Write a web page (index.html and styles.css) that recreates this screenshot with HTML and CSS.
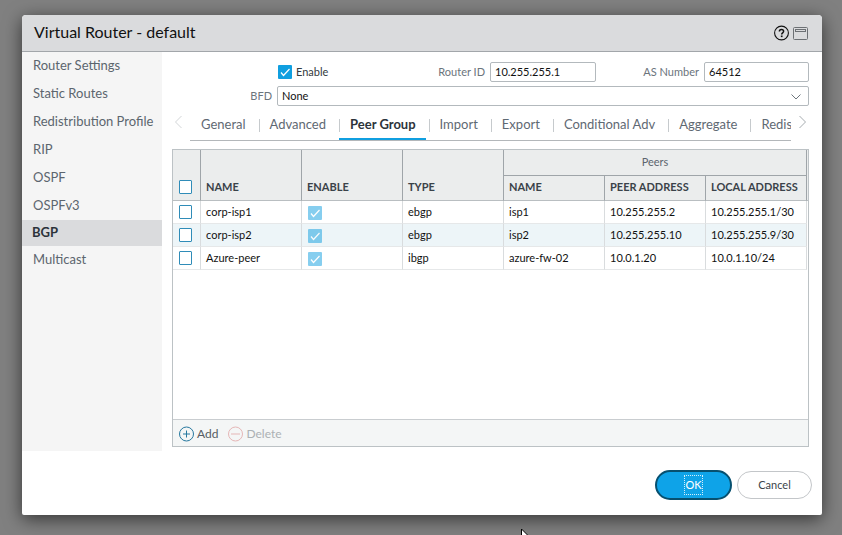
FILE: index.html
```html
<!DOCTYPE html>
<html lang="en">
<head>
<meta charset="utf-8">
<title>Virtual Router - default</title>
<link rel="stylesheet" href="styles.css">
</head>
<body>
<main class="dialog">
  <header class="titlebar">
    <h1>Virtual Router - default</h1>
    <button class="tool" type="button" aria-label="Help">
      <svg width="16" height="16" viewBox="0 0 16 16" fill="none" stroke="#111"><circle cx="7.500" cy="8" r="6.900" stroke-width="1.100"/><path d="M5.400 6.500C5.400 5 6.200 4.500 7.500 4.500s2.100.7 2.100 1.800c0 1.500-1.900 1.600-1.900 3.200" stroke-width="1.500"/><path d="M7.700 10.500v1.600" stroke-width="1.700"/></svg>
    </button>
    <button class="tool" type="button" aria-label="Maximize">
      <svg width="16" height="16" viewBox="0 0 16 16" fill="none" stroke="#6c7074"><rect x=".5" y="2.500" width="14" height="12" rx="1"/><rect x="2.500" y="4.500" width="10" height="2"/></svg>
    </button>
  </header>

  <div class="body">
    <nav class="sidebar">
      <a href="#">Router Settings</a>
      <a href="#">Static Routes</a>
      <a href="#">Redistribution Profile</a>
      <a href="#">RIP</a>
      <a href="#">OSPF</a>
      <a href="#">OSPFv3</a>
      <a href="#" class="current">BGP</a>
      <a href="#">Multicast</a>
    </nav>

    <section class="content">
      <div class="form">
        <label class="enable"><input class="check" type="checkbox" checked>Enable</label>
        <label class="label" for="router-id">Router ID</label>
        <input class="field" id="router-id" type="text" value="10.255.255.1">
        <label class="label" for="as-number">AS Number</label>
        <input class="field" id="as-number" type="text" value="64512">
        <label class="label bfd" for="bfd">BFD</label>
        <div class="combo">
          <select class="field" id="bfd"><option>None</option></select>
          <svg width="12" height="8" viewBox="0 0 12 8" fill="none" stroke="#6d757c"><path d="M1.500 1.500 6 6l4.500-4.500"/></svg>
        </div>
      </div>

      <div class="tabbar">
        <button class="scroll" type="button" aria-label="Scroll left"><svg width="8" height="14" viewBox="0 0 8 14" fill="none" stroke="#d2d5d7"><path d="M7.500 1 1.500 7l6 6"/></svg></button>
        <div class="tabs" role="tablist">
          <button type="button" role="tab">General</button>
          <button type="button" role="tab">Advanced</button>
          <button type="button" role="tab" class="active" aria-selected="true">Peer Group</button>
          <button type="button" role="tab">Import</button>
          <button type="button" role="tab">Export</button>
          <button type="button" role="tab">Conditional Adv</button>
          <button type="button" role="tab">Aggregate</button>
          <button type="button" role="tab">Redist Rules</button>
        </div>
        <button class="scroll right" type="button" aria-label="Scroll right"><svg width="8" height="14" viewBox="0 0 8 14" fill="none" stroke="#a5abaf"><path d="m.500 1 6 6-6 6"/></svg></button>
      </div>

      <div class="grid">
        <div class="table-wrap">
          <table>
            <colgroup><col class="col-check"><col><col><col><col><col><col></colgroup>
            <thead>
              <tr>
                <th rowspan="2" class="pick"><input class="check" type="checkbox" aria-label="Select all"></th>
                <th rowspan="2">NAME</th>
                <th rowspan="2">ENABLE</th>
                <th rowspan="2">TYPE</th>
                <th colspan="3" class="group">Peers</th>
              </tr>
              <tr>
                <th>NAME</th>
                <th>PEER ADDRESS</th>
                <th>LOCAL ADDRESS</th>
              </tr>
            </thead>
            <tbody>
              <tr>
                <td class="pick"><input class="check" type="checkbox" aria-label="Select corp-isp1"></td>
                <td>corp-isp1</td>
                <td class="flag"><input class="check" type="checkbox" checked disabled aria-label="corp-isp1 enabled"></td>
                <td>ebgp</td><td>isp1</td><td>10.255.255.2</td><td>10.255.255.1/30</td>
              </tr>
              <tr>
                <td class="pick"><input class="check" type="checkbox" aria-label="Select corp-isp2"></td>
                <td>corp-isp2</td>
                <td class="flag"><input class="check" type="checkbox" checked disabled aria-label="corp-isp2 enabled"></td>
                <td>ebgp</td><td>isp2</td><td>10.255.255.10</td><td>10.255.255.9/30</td>
              </tr>
              <tr>
                <td class="pick"><input class="check" type="checkbox" aria-label="Select Azure-peer"></td>
                <td>Azure-peer</td>
                <td class="flag"><input class="check" type="checkbox" checked disabled aria-label="Azure-peer enabled"></td>
                <td>ibgp</td><td>azure-fw-02</td><td>10.0.1.20</td><td>10.0.1.10/24</td>
              </tr>
            </tbody>
          </table>
        </div>
        <div class="actions">
          <button type="button"><svg width="16" height="16" viewBox="0 0 16 16" fill="none" stroke="#26789f"><circle cx="7.500" cy="8" r="7"/><path d="M7.500 4.500v7M4 8h7"/></svg>Add</button>
          <button type="button" disabled><svg width="16" height="16" viewBox="0 0 16 16" fill="none" stroke="#e5b6b6"><circle cx="7.500" cy="8" r="7"/><path d="M3 8h9"/></svg>Delete</button>
        </div>
      </div>
    </section>
  </div>

  <footer class="footer">
    <button class="ok" type="button"><span>OK</span></button>
    <button class="cancel" type="button">Cancel</button>
  </footer>
</main>
<svg class="pointer" width="12" height="18" viewBox="0 0 12 18" fill="#fff" stroke="#000"><path d="M.500 1v13l3-3 2 5 2-1-2-4.500h4.500z"/></svg>
</body>
</html>
```

FILE: styles.css
```css
* {
  box-sizing: border-box;
}

body {
  margin: 0;
  height: 100vh;
  padding: 15px 20px 20px 22px;
  display: flex;
  overflow: hidden;
  position: relative;
  background: #808080;
  font: 11px/16px Lato, "Liberation Sans", sans-serif;
  color: #111;
}

button, input, select {
  font: inherit;
  color: inherit;
}

button {
  margin: 0;
  padding: 0;
  border: 0;
  background: none;
}

svg {
  display: block;
  flex: none;
}

.dialog {
  flex: 1;
  min-width: 0;
  display: flex;
  flex-direction: column;
  background: #fff;
  border-radius: 4px 4px 2px 2px;
  box-shadow: 0 4px 18px rgba(0, 0, 0, 0.6);
}

.titlebar {
  display: flex;
  align-items: center;
  gap: 3px;
  height: 37px;
  padding: 0 13px 0 12px;
  background: #dadbdd;
  border-bottom: 1px solid #a2a6aa;
  border-radius: 4px 4px 0 0;
}

.titlebar h1 {
  flex: 1;
  margin: 0;
  padding-bottom: 2px;
  font-size: 16px;
  line-height: 20px;
  font-weight: 400;
}

.body {
  flex: 1;
  display: flex;
  min-height: 0;
}

.sidebar {
  flex: none;
  width: 140px;
  background: #f5f5f5;
}

.sidebar a {
  display: block;
  padding: 0 0 2px 11px;
  font-size: 13px;
  line-height: 26px;
  color: #5c656e;
  text-decoration: none;
  white-space: nowrap;
}

.sidebar .current {
  padding-left: 10px;
  line-height: 24px;
  font-weight: 700;
  color: #2c333a;
  background: #dadbdd;
}

.content {
  flex: 1;
  min-width: 0;
  display: flex;
  flex-direction: column;
  padding: 10px 13px 4px 10px;
}

.form {
  display: grid;
  grid-template-columns: 100px 105px 1fr 106px 1fr 105px;
  column-gap: 5px;
  row-gap: 4px;
  align-items: center;
}

.enable {
  grid-column: 2;
  display: flex;
  align-items: center;
  gap: 4px;
  padding-left: 1px;
  color: #333a40;
}

.label {
  text-align: right;
  color: #6b747c;
}

.bfd {
  grid-column: 1;
}

.field {
  width: 100%;
  height: 20px;
  padding: 0 4px 1px;
  border: 1px solid #b3b9bd;
  border-radius: 2px;
  background: #fff;
  color: #111;
  outline: 0;
}

.combo {
  grid-column: 2 / -1;
  position: relative;
}

.combo .field {
  display: block;
  appearance: none;
}

.combo svg {
  position: absolute;
  right: 7px;
  top: 7px;
  pointer-events: none;
}

.check {
  appearance: none;
  display: block;
  flex: none;
  width: 14px;
  height: 14px;
  margin: 0;
  border: 1px solid #2f8cb8;
  border-radius: 1px;
  background: #fff;
}

.check:checked {
  border: 0;
  background: #109fe0 url("data:image/svg+xml,%3Csvg xmlns='http://www.w3.org/2000/svg' viewBox='0 0 14 14' fill='none' stroke='white' stroke-width='1.200'%3E%3Cpath d='M3 7.500 5.500 10.500 11.500 4'/%3E%3C/svg%3E");
}

.check:disabled {
  opacity: 0.5;
}

.tabbar {
  display: flex;
  height: 35px;
  margin-bottom: 8px;
}

.scroll {
  width: 18px;
  height: 31px;
  padding-left: 2px;
}

.scroll.right {
  padding-left: 8px;
}

.tabs {
  flex: 1;
  min-width: 0;
  display: flex;
  overflow: hidden;
  border-bottom: 1px solid #b3b7ba;
}

.tabs button {
  flex: none;
  position: relative;
  margin-right: 3px;
  padding: 2px 10px 0 11px;
  font-size: 13px;
  color: #5f6973;
}

.tabs button + button::before {
  content: "";
  position: absolute;
  left: 0;
  top: 13px;
  height: 13px;
  border-left: 1px solid #c6cacd;
}

.tabs .active {
  font-weight: 700;
  color: #2c333a;
  border-bottom: 2px solid #109fe0;
  padding-top: 4px;
}

.grid {
  flex: 1;
  min-height: 0;
  display: flex;
  flex-direction: column;
  border: 1px solid #bcc2c5;
}

.table-wrap {
  flex: 1;
  background: linear-gradient(#ebeded 50px, #b9bec1 50px, #b9bec1 51px, #fff 51px);
}

table {
  width: calc(100% - 1px);
  table-layout: fixed;
  border-collapse: separate;
  border-spacing: 0;
}

.col-check {
  width: 28px;
}

th {
  height: 25px;
  padding: 0 0 5px 5px;
  border-right: 1px solid #9fa5a9;
  line-height: 16px;
  font-weight: 700;
  text-align: left;
  vertical-align: bottom;
  white-space: nowrap;
  color: #3a4249;
}

thead tr:first-child th {
  height: 26px;
}

thead tr:last-child th,
thead th[rowspan] {
  border-bottom: 1px solid #b9bec1;
}

thead th.group {
  padding: 0 0 2px;
  border-bottom: 1px solid #9fa5a9;
  font-weight: 400;
  text-align: center;
  vertical-align: middle;
  color: #5c656e;
}

td {
  height: 23px;
  padding: 0 0 0 5px;
  border-right: 1px solid #d9dcde;
  border-bottom: 1px solid #e6e8e9;
}

th.pick {
  padding: 0 0 6px 6px;
}

td.pick {
  padding-left: 6px;
}

.pick .check {
  width: 13px;
}

.flag {
  padding: 2px 0 0 6px;
}

tbody tr:nth-child(even) {
  background: #edf5f8;
}

.actions {
  display: flex;
  align-items: center;
  gap: 10px;
  height: 27px;
  padding: 2px 0 0 6px;
  background: #f4f6f6;
  border-top: 1px solid #c9cdd0;
  font-size: 12px;
}

.actions button {
  display: flex;
  align-items: center;
  gap: 2px;
  color: #555d64;
}

.actions button:disabled {
  color: #acb1b4;
}

.footer {
  display: flex;
  justify-content: flex-end;
  gap: 5px;
  height: 64px;
  padding: 19px 10px 0;
}

.footer button {
  width: 75px;
  height: 28px;
  margin-top: 1px;
  border: 1px solid #c3c6c9;
  border-radius: 14px;
  color: #3c444b;
}

.footer .ok {
  width: 77px;
  height: 30px;
  margin-top: 0;
  border: 2px solid #07506f;
  border-radius: 15px;
  background: #0ea3e8;
  color: #fff;
}

.ok span {
  display: inline-block;
  padding: 1px 0;
  border: 1px dotted #d3effb;
}

.pointer {
  position: absolute;
  left: 521px;
  top: 528px;
}
```
